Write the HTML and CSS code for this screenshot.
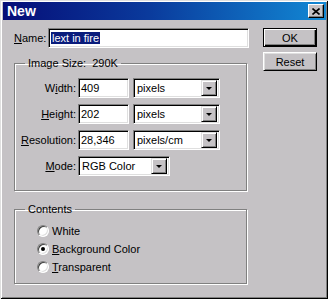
FILE: index.html
```html
<!DOCTYPE html>
<html lang="en">
<head>
<meta charset="UTF-8">
<title>New</title>
<link rel="stylesheet" href="styles.css">
</head>
<body>
  <div class="window">
    <div class="titlebar">
      <span class="title">New</span>
      <span class="close">
        <svg width="8" height="7" viewBox="0 0 8 7"><path d="M0.5 0.5 L7.5 6.5 M7.5 0.5 L0.5 6.5" stroke="#000" stroke-width="1.6"/></svg>
      </span>
    </div>

    <div class="content">
      <div class="main">
        <div class="name-row">
          <span class="label"><u>N</u>ame:</span>
          <div class="field name-field"><span class="selected">lext in fire</span></div>
        </div>

        <fieldset class="group size-group">
          <legend>Image Size:&nbsp; 290K</legend>
          <div class="rows">
            <div class="row">
              <span class="row-label">W<u>i</u>dth:</span>
              <div class="field num">409</div>
              <div class="field select unit"><span>pixels</span><span class="arrow"></span></div>
            </div>
            <div class="row">
              <span class="row-label"><u>H</u>eight:</span>
              <div class="field num">202</div>
              <div class="field select unit"><span>pixels</span><span class="arrow"></span></div>
            </div>
            <div class="row">
              <span class="row-label"><u>R</u>esolution:</span>
              <div class="field num">28,346</div>
              <div class="field select unit"><span>pixels/cm</span><span class="arrow"></span></div>
            </div>
            <div class="row">
              <span class="row-label"><u>M</u>ode:</span>
              <div class="field select mode"><span>RGB Color</span><span class="arrow"></span></div>
            </div>
          </div>
        </fieldset>

        <fieldset class="group contents-group">
          <legend>Contents</legend>
          <div class="radios">
            <div class="radio"><span class="dot"></span><span>White</span></div>
            <div class="radio"><span class="dot checked"></span><span><u>B</u>ackground Color</span></div>
            <div class="radio"><span class="dot"></span><span><u>T</u>ransparent</span></div>
          </div>
        </fieldset>
      </div>

      <div class="side">
        <button class="btn btn-default">OK</button>
        <button class="btn">Reset</button>
      </div>
    </div>
  </div>
</body>
</html>
```

FILE: styles.css
```css
body {
  margin: 0;
  background: #c5c2c5;
  font-family: "Liberation Sans", Arial, sans-serif;
  font-size: 11px;
  color: #000;
}

/* window frame */
.window {
  width: 328px;
  height: 299px;
  box-sizing: border-box;
  padding: 2px 2px 2px 3px;
  box-shadow: inset 1px 1px 0 #dfdfdf, inset -1px -1px 0 #000, inset 2px 2px 0 #fff, inset -2px -2px 0 #808080;
}

.titlebar {
  height: 18px;
  display: flex;
  align-items: center;
  justify-content: space-between;
  padding: 0 2px 0 4px;
  background: linear-gradient(to right, #060e78, #0a3a9c 45%, #1288d4);
  color: #fff;
}
.title {
  font-weight: bold;
  font-size: 14px;
}
.close {
  width: 16px;
  height: 14px;
  box-sizing: border-box;
  display: flex;
  align-items: center;
  justify-content: center;
  background: #c5c2c5;
  border: 1px solid;
  border-color: #fff #000 #000 #fff;
  box-shadow: inset -1px -1px 0 #808080;
}

.content {
  display: flex;
  padding: 8px 0 0 11px;
}
.main {
  width: 235px;
}

/* sunken text box */
.field {
  box-sizing: border-box;
  height: 20px;
  background: #fff;
  border: 1px solid;
  border-color: #808080 #fff #fff #808080;
  box-shadow: inset 1px 1px 0 #000, inset -1px -1px 0 #dfdfdf;
  display: flex;
  align-items: center;
  padding-left: 2px;
  white-space: nowrap;
}

.name-row {
  display: flex;
  align-items: center;
}
.name-row .label {
  width: 34px;
}
.name-field {
  width: 201px;
}
.selected {
  background: #0a1c7c;
  color: #fff;
  padding: 0 1px;
}

/* etched group box */
.group {
  width: 233px;
  box-sizing: border-box;
  margin: 9px 0 0;
  padding: 0;
  min-width: 0;
  border: 1px solid #808080;
  box-shadow: 1px 1px 0 #fff, inset 1px 1px 0 #fff;
}
.group legend {
  margin-left: 10px;
  padding: 0 3px;
  line-height: 13px;
}

.rows {
  display: flex;
  flex-direction: column;
  gap: 6px;
  padding: 8px 0 14px;
}
.row {
  display: flex;
  align-items: center;
}
.row-label {
  width: 61px;
  margin-right: 2px;
  text-align: right;
}
.num {
  width: 51px;
  margin-right: 4px;
}
.select {
  justify-content: space-between;
  padding: 0 2px 0 3px;
}
.unit {
  width: 87px;
}
.mode {
  width: 92px;
}
.arrow {
  width: 16px;
  height: 16px;
  box-sizing: border-box;
  display: flex;
  align-items: center;
  justify-content: center;
  background: #c5c2c5;
  border: 1px solid;
  border-color: #dfdfdf #000 #000 #dfdfdf;
  box-shadow: inset 1px 1px 0 #fff, inset -1px -1px 0 #808080;
}
.arrow::after {
  content: "";
  border: 3px solid transparent;
  border-top: 3px solid #000;
  border-bottom: 0;
}

.contents-group {
  margin-top: 12px;
}
.radios {
  display: flex;
  flex-direction: column;
  padding: 6px 0 7px 22px;
}
.radio {
  height: 18px;
  display: flex;
  align-items: center;
  gap: 3px;
}
.dot {
  width: 12px;
  height: 12px;
  box-sizing: border-box;
  border-radius: 50%;
  background: #fff;
  border: 1px solid;
  border-color: #808080 #fff #fff #808080;
  box-shadow: inset 1px 1px 0 #404040, inset -1px -1px 0 #dfdfdf;
  display: flex;
  align-items: center;
  justify-content: center;
}
.dot.checked::after {
  content: "";
  width: 4px;
  height: 4px;
  border-radius: 50%;
  background: #000;
}

/* buttons */
.side {
  display: flex;
  flex-direction: column;
  gap: 5px;
  margin-left: 14px;
}
.btn {
  width: 54px;
  height: 19px;
  box-sizing: border-box;
  padding: 0;
  font: inherit;
  color: #000;
  background: #c5c2c5;
  border: 1px solid;
  border-color: #fff #000 #000 #fff;
  box-shadow: inset 1px 1px 0 #dfdfdf, inset -1px -1px 0 #808080;
}
.btn-default {
  border-color: #000;
  box-shadow: inset 1px 1px 0 #fff, inset -1px -1px 0 #000, inset -2px -2px 0 #808080;
}
```
